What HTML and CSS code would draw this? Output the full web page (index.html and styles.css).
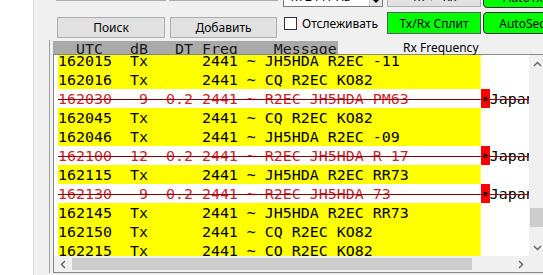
FILE: index.html
```html
<!DOCTYPE html>
<html lang="ru">
<head>
    <meta charset="UTF-8">
    <meta name="viewport" content="width=device-width, initial-scale=1.0">
    <title>WSJT-X</title>
    <link rel="stylesheet" href="styles.css">
</head>
<body>
    <div class="app">
        <div class="gutter"></div>

        <div class="main">
            <!-- панель кнопок -->
            <div class="controls">
                <div class="col col-a">
                    <div class="btn-row row-top">
                        <button class="btn w110"></button>
                        <button class="btn w109"></button>
                    </div>
                    <div class="btn-row row-main">
                        <button class="btn w108">Поиск</button>
                        <button class="btn w107">Добавить</button>
                    </div>
                </div>

                <div class="col col-b">
                    <div class="spin">
                        <span class="spin-text">Tx 2441 Hz</span>
                        <span class="spin-btns">
                            <svg width="8" height="5" viewBox="0 0 8 5"><path d="M0 0 L8 0 L4 4 Z" fill="#000"/></svg>
                        </span>
                    </div>
                    <label class="check-row">
                        <span class="box"></span>
                        <span>Отслеживать</span>
                    </label>
                </div>

                <div class="col col-c">
                    <button class="btn gray-top">Tx ← Rx</button>
                    <button class="btn green split">Tx/Rx Сплит</button>
                </div>

                <div class="col col-d">
                    <button class="btn green round round-top">AutoTx</button>
                    <button class="btn green round autoseq">AutoSeq</button>
                </div>
            </div>

            <!-- окно декодов -->
            <div class="frame">
                <div class="header">
                    <div class="hdr">  UTC   dB   DT Freq    Message</div>
                    <div class="rx-label">Rx Frequency</div>
                </div>

                <div class="textedit">
                    <div class="te-body">
                        <div class="te-view">
                            <div class="rows">
                                <div class="row tx">162015  Tx      2441 ~ JH5HDA R2EC -11</div>
                                <div class="row tx">162016  Tx      2441 ~ CQ R2EC KO82</div>
                                <div class="row rx">162030   9  0.2 2441 ~ R2EC JH5HDA PM63        <span class="dot">•</span><span class="country">Japan</span></div>
                                <div class="row tx">162045  Tx      2441 ~ CQ R2EC KO82</div>
                                <div class="row tx">162046  Tx      2441 ~ JH5HDA R2EC -09</div>
                                <div class="row rx">162100  12  0.2 2441 ~ R2EC JH5HDA R 17        <span class="dot">•</span><span class="country">Japan</span></div>
                                <div class="row tx">162115  Tx      2441 ~ JH5HDA R2EC RR73</div>
                                <div class="row rx">162130   9  0.2 2441 ~ R2EC JH5HDA 73          <span class="dot">•</span><span class="country">Japan</span></div>
                                <div class="row tx">162145  Tx      2441 ~ JH5HDA R2EC RR73</div>
                                <div class="row tx">162150  Tx      2441 ~ CQ R2EC KO82</div>
                                <div class="row tx">162215  Tx      2441 ~ CQ R2EC KO82</div>
                            </div>
                        </div>
                        <div class="vscroll">
                            <div class="arrow">
                                <svg width="9" height="6" viewBox="0 0 9 6"><polyline points="1,5 4.5,1.5 8,5" fill="none" stroke="#606060" stroke-width="1.4"/></svg>
                            </div>
                            <div class="vthumb"></div>
                            <div class="spacer"></div>
                            <div class="arrow">
                                <svg width="9" height="6" viewBox="0 0 9 6"><polyline points="1,1 4.5,4.5 8,1" fill="none" stroke="#606060" stroke-width="1.4"/></svg>
                            </div>
                        </div>
                    </div>
                    <div class="te-foot">
                        <div class="hscroll">
                            <div class="arrow">
                                <svg width="6" height="9" viewBox="0 0 6 9"><polyline points="5,1 1.5,4.5 5,8" fill="none" stroke="#606060" stroke-width="1.4"/></svg>
                            </div>
                            <div class="hthumb"></div>
                            <div class="spacer"></div>
                            <div class="arrow">
                                <svg width="6" height="9" viewBox="0 0 6 9"><polyline points="1,1 4.5,4.5 1,8" fill="none" stroke="#606060" stroke-width="1.4"/></svg>
                            </div>
                        </div>
                        <div class="corner"></div>
                    </div>
                </div>
            </div>
        </div>
    </div>
</body>
</html>
```

FILE: styles.css
```css
body {
    margin: 0;
    background-color: #fff;
    font-family: "Noto Sans", sans-serif;
    font-size: 12px;
    overflow: hidden;
}

.app {
    display: flex;
    height: 275px;
}

.gutter {
    width: 33px;
    flex: none;
    background-color: #fff;
}

.main {
    flex: 1;
    min-width: 0;
    overflow: hidden;
    background-color: #f0f0f0;
    border-left: 1px solid #dcdcdc;
}

/* панель кнопок */
.controls {
    display: flex;
    height: 40px;
}

.col {
    display: flex;
    flex-direction: column;
    flex: none;
}

.btn {
    box-sizing: border-box;
    height: 22px;
    padding: 0;
    font: inherit;
    color: #000;
    background-color: #e1e1e1;
    border: 1px solid #adadad;
    white-space: nowrap;
    overflow: hidden;
}

.col-a {
    margin-left: 22px;
    width: 222px;
}

.btn-row {
    display: flex;
}

.row-top {
    gap: 3px;
    margin-top: -21px;
}

.row-main {
    gap: 5px;
    padding-left: 1px;
    margin-top: 16px;
}

.row-main .btn {
    height: 21px;
}

.w110 { width: 110px; }
.w109 { width: 109px; }
.w108 { width: 108px; }
.w107 { width: 107px; }

.col-b {
    margin-left: 5px;
    width: 100px;
}

.spin {
    box-sizing: border-box;
    height: 22px;
    margin-top: -15px;
    display: flex;
    align-items: center;
    justify-content: space-between;
    background-color: #fff;
    border: 1px solid #7a7a7a;
}

.spin-text {
    padding-left: 5px;
}

.spin-btns {
    display: flex;
    align-items: flex-end;
    justify-content: center;
    width: 13px;
    height: 100%;
    padding-bottom: 2px;
    box-sizing: border-box;
    background-color: #e6e6e6;
    border-left: 1px solid #c8c8c8;
}

.check-row {
    display: flex;
    align-items: center;
    gap: 5px;
    margin-top: 10px;
    margin-left: 1px;
    height: 13px;
    white-space: nowrap;
}

.box {
    box-sizing: border-box;
    width: 13px;
    height: 13px;
    background-color: #fff;
    border: 1px solid #333;
}

.col-c {
    margin-left: 4px;
    width: 94px;
}

.gray-top {
    margin-top: -15px;
}

.green {
    background-color: #00ff00;
    border-color: #5a5a5a;
}

.split {
    margin-top: 5px;
}

.col-d {
    margin-left: 2px;
    width: 80px;
}

.round {
    border-color: #303030;
    border-radius: 4px;
}

.round-top {
    margin-top: -14px;
}

.autoseq {
    margin-top: 4px;
}

/* окно декодов */
.frame {
    width: 520px;
    margin-left: 15px;
    padding-left: 3px;
    padding-top: 1px;
    border-left: 1px solid #a0a0a0;
}

.header {
    display: flex;
    height: 13px;
}

.hdr {
    width: 285px;
    flex: none;
    overflow: hidden;
    background-color: #a9a9a9;
    color: #1a1a1a;
    font-family: "DejaVu Sans Mono", monospace;
    font-size: 14.95px;
    line-height: 16px;
    white-space: pre;
    padding-left: 5px;
    box-sizing: border-box;
}

.rx-label {
    margin-left: 65px;
    line-height: 13px;
    white-space: nowrap;
}

.textedit {
    width: 494px;
    border: 1px solid #828790;
}

.te-body {
    display: flex;
    height: 201px;
}

.te-view {
    width: 475px;
    flex: none;
    overflow: hidden;
    background-color: #fff;
}

.rows {
    margin-top: -4px;
    padding-left: 4px;
    font-family: "DejaVu Sans Mono", monospace;
    font-size: 14.95px;
}

.row {
    box-sizing: border-box;
    height: 19px;
    padding-top: 2px;
    line-height: 17px;
    white-space: pre;
}

.row.tx {
    color: #000;
    background: linear-gradient(#ffff00, #ffff00) no-repeat 0 0 / 47ch 100%;
}

.row.rx {
    color: #c8262e;
    text-decoration: line-through #8b0000 1px;
    background: linear-gradient(#ff0000, #ff0000) no-repeat 47ch 0 / 1ch 100%;
}

.row.rx .dot,
.row.rx .country {
    color: #000;
}

.vscroll {
    width: 17px;
    flex: none;
    display: flex;
    flex-direction: column;
    background-color: #f0f0f0;
}

.arrow {
    width: 17px;
    height: 17px;
    flex: none;
    display: flex;
    align-items: center;
    justify-content: center;
}

.vthumb {
    height: 19px;
    margin: 136px 1px 0 1px;
    background-color: #cdcdcd;
}

.spacer {
    flex: 1;
}

.te-foot {
    display: flex;
    height: 16px;
}

.hscroll {
    width: 475px;
    flex: none;
    display: flex;
    align-items: center;
    background-color: #f0f0f0;
}

.hscroll .arrow {
    height: 16px;
}

.hthumb {
    width: 400px;
    height: 12px;
    margin-left: 1px;
    background-color: #cdcdcd;
}

.corner {
    width: 17px;
    background-color: #f0f0f0;
}
```
